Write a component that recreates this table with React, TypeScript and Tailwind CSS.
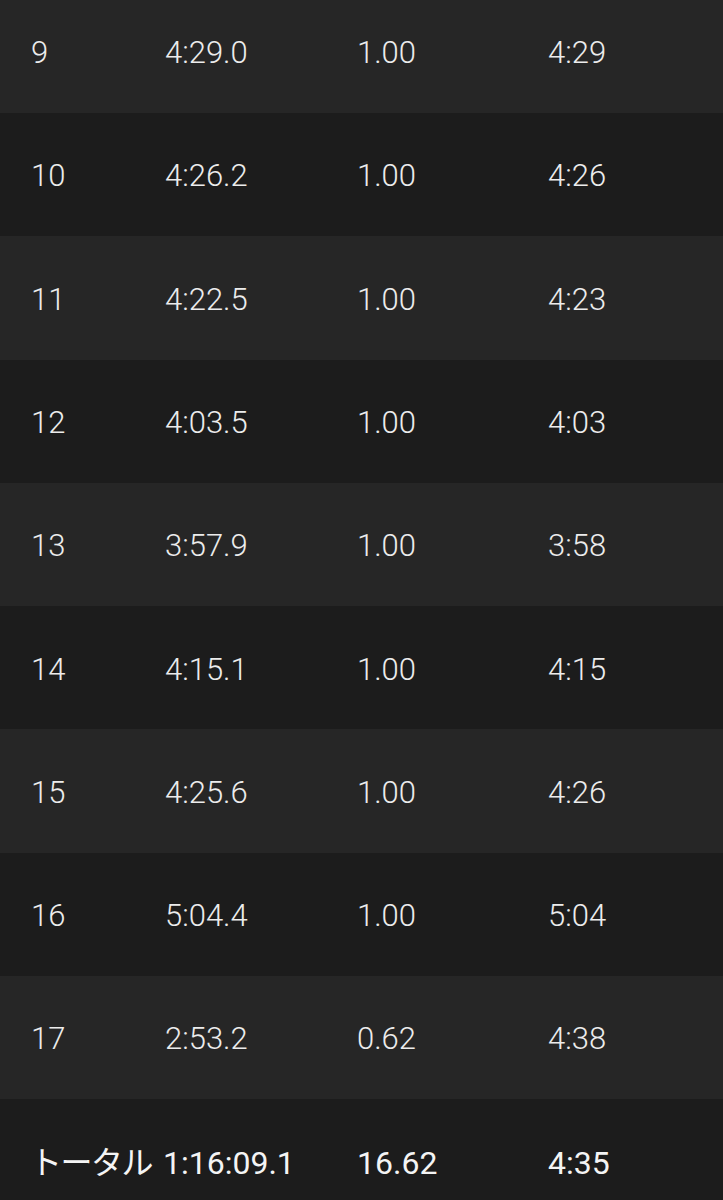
const laps = [
  { n: "9", time: "4:29.0", dist: "1.00", pace: "4:29" },
  { n: "10", time: "4:26.2", dist: "1.00", pace: "4:26" },
  { n: "11", time: "4:22.5", dist: "1.00", pace: "4:23" },
  { n: "12", time: "4:03.5", dist: "1.00", pace: "4:03" },
  { n: "13", time: "3:57.9", dist: "1.00", pace: "3:58" },
  { n: "14", time: "4:15.1", dist: "1.00", pace: "4:15" },
  { n: "15", time: "4:25.6", dist: "1.00", pace: "4:26" },
  { n: "16", time: "5:04.4", dist: "1.00", pace: "5:04" },
  { n: "17", time: "2:53.2", dist: "0.62", pace: "4:38" },
];

export default function App() {
  return (
    <div
      className="w-[723px] h-[1200px] overflow-hidden bg-[#1c1c1c] text-[#ececec]"
      style={{ fontFamily: 'Roboto, "Noto Sans CJK JP", sans-serif' }}
    >
      <div className="-mt-[10.3px]">
        {laps.map((lap, i) => (
          <div
            key={lap.n}
            className={`grid grid-cols-[134px_192px_191px_1fr] items-center pl-[31px] pt-[4px] h-[123.3px] text-[31px] font-light ${
              i % 2 === 0 ? "bg-[#262626]" : "bg-[#1c1c1c]"
            }`}
          >
            <span>{lap.n}</span>
            <span>{lap.time}</span>
            <span>{lap.dist}</span>
            <span>{lap.pace}</span>
          </div>
        ))}
        <div className="grid grid-cols-[133px_194px_191px_1fr] items-center pl-[30px] pt-[2px] h-[126px] text-[32px] font-normal text-[#f4f4f4] bg-[#1c1c1c]">
          <span className="whitespace-nowrap tracking-[-1.5px]">トータル</span>
          <span>1:16:09.1</span>
          <span>16.62</span>
          <span>4:35</span>
        </div>
      </div>
    </div>
  );
}
